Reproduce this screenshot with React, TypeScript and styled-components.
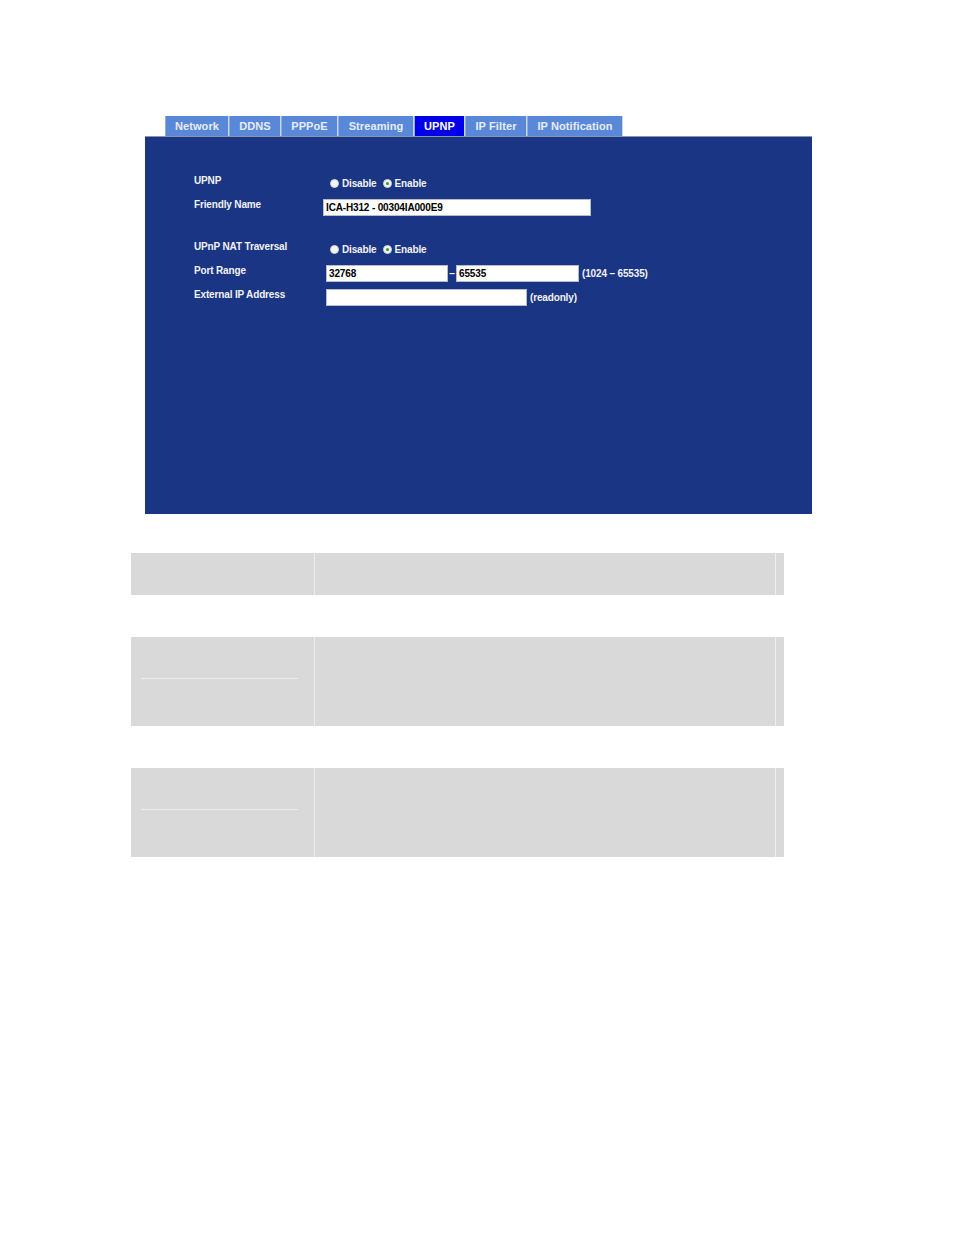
import styled, { createGlobalStyle } from "styled-components";

const GlobalStyle = createGlobalStyle`
  body {
    margin: 0;
    background: #ffffff;
    font-family: "Liberation Sans", Arial, sans-serif;
  }
`;

const Page = styled.div`
  width: 954px;
  min-height: 1235px;
  padding-top: 116px;
  box-sizing: border-box;
`;

const TabBar = styled.div`
  display: flex;
  margin-left: 165px;
  height: 20px;
`;

const Tab = styled.div<{ $active?: boolean; $w: number }>`
  width: ${p => p.$w}px;
  box-sizing: border-box;
  display: flex;
  align-items: center;
  justify-content: center;
  background: ${p => (p.$active ? "#0000e8" : "#5a88d8")};
  border-right: 1px solid #c9d6ee;
  border-left: 1px solid #8fb0e6;
  color: ${p => (p.$active ? "#ffffff" : "#e8ecf4")};
  font-size: 11px;
  font-weight: bold;
  letter-spacing: 0.1px;
`;

const Panel = styled.div`
  margin-left: 145px;
  width: 667px;
  height: 378px;
  box-sizing: border-box;
  background: #1a3583;
  border-top: 1px solid #8a93a8;
  padding: 34px 0 0 49px;
`;

const Form = styled.div`
  display: grid;
  grid-template-columns: 129px 1fr;
  grid-template-rows: 24px 24px 18px 24px 24px 24px;
`;

const Spacer = styled.div`
  grid-column: 1 / 3;
`;

const Label = styled.div`
  align-self: center;
  margin-bottom: 6px;
  color: #f2f2f2;
  font-size: 10px;
  letter-spacing: -0.15px;
  font-weight: bold;
`;

const Value = styled.div<{ $indent?: number }>`
  display: flex;
  align-items: center;
  padding-left: ${p => p.$indent ?? 0}px;
  color: #f2f2f2;
  font-size: 10px;
  letter-spacing: -0.15px;
  font-weight: bold;
`;

const Radio = styled.span<{ $checked?: boolean }>`
  width: 9px;
  height: 9px;
  border-radius: 50%;
  background: #f4f4f4;
  box-sizing: border-box;
  border: 1px solid #d0d0d0;
  display: inline-flex;
  align-items: center;
  justify-content: center;
  margin-right: 3px;

  &::after {
    content: "";
    width: 3px;
    height: 3px;
    border-radius: 50%;
    background: ${p => (p.$checked ? "#2d9a3a" : "transparent")};
  }
`;

const RadioText = styled.span`
  margin-right: 6px;
`;

const Input = styled.div<{ $w: number }>`
  width: ${p => p.$w}px;
  height: 17px;
  box-sizing: border-box;
  background: #ffffff;
  border: 1px solid #b8bcc8;
  color: #000000;
  font-size: 10px;
  letter-spacing: -0.15px;
  font-weight: bold;
  display: flex;
  align-items: center;
  padding-left: 2px;
`;

const Dash = styled.span`
  width: 8px;
  text-align: center;
`;

const Note = styled.span`
  margin-left: 3px;
`;

const GreyTable = styled.div<{ $h: number; $top: number }>`
  margin: ${p => p.$top}px 0 0 131px;
  width: 653px;
  height: ${p => p.$h}px;
  display: grid;
  grid-template-columns: 183px 1fr 8px;
  column-gap: 1px;
  background: #eeeeee;
`;

const Cell = styled.div`
  background: #d9d9d9;
  display: flex;
  flex-direction: column;
`;

const RuleCell = styled(Cell)`
  padding: 0 16px 0 10px;
`;

const Rule = styled.div`
  margin-top: 41px;
  height: 1px;
  background: #ececec;
`;

export default function App() {
  const tabs = [
    { name: "Network", w: 64 },
    { name: "DDNS", w: 52 },
    { name: "PPPoE", w: 57 },
    { name: "Streaming", w: 76 },
    { name: "UPNP", w: 51 },
    { name: "IP Filter", w: 62 },
    { name: "IP Notification", w: 96 },
  ];

  return (
    <Page>
      <GlobalStyle />
      <TabBar>
        {tabs.map(t => (
          <Tab key={t.name} $w={t.w} $active={t.name === "UPNP"}>
            {t.name}
          </Tab>
        ))}
      </TabBar>
      <Panel>
        <Form>
          <Label>UPNP</Label>
          <Value $indent={7}>
            <Radio />
            <RadioText>Disable</RadioText>
            <Radio $checked />
            <RadioText>Enable</RadioText>
          </Value>
          <Label>Friendly Name</Label>
          <Value>
            <Input $w={268}>ICA-H312 - 00304IA000E9</Input>
          </Value>
          <Spacer />
          <Label>UPnP NAT Traversal</Label>
          <Value $indent={7}>
            <Radio />
            <RadioText>Disable</RadioText>
            <Radio $checked />
            <RadioText>Enable</RadioText>
          </Value>
          <Label>Port Range</Label>
          <Value $indent={3}>
            <Input $w={122}>32768</Input>
            <Dash>–</Dash>
            <Input $w={123}>65535</Input>
            <Note>(1024 – 65535)</Note>
          </Value>
          <Label>External IP Address</Label>
          <Value $indent={3}>
            <Input $w={201} />
            <Note>(readonly)</Note>
          </Value>
        </Form>
      </Panel>
      <GreyTable $top={39} $h={42}>
        <Cell />
        <Cell />
        <Cell />
      </GreyTable>
      <GreyTable $top={42} $h={89}>
        <RuleCell>
          <Rule />
        </RuleCell>
        <Cell />
        <Cell />
      </GreyTable>
      <GreyTable $top={42} $h={89}>
        <RuleCell>
          <Rule />
        </RuleCell>
        <Cell />
        <Cell />
      </GreyTable>
    </Page>
  );
}
